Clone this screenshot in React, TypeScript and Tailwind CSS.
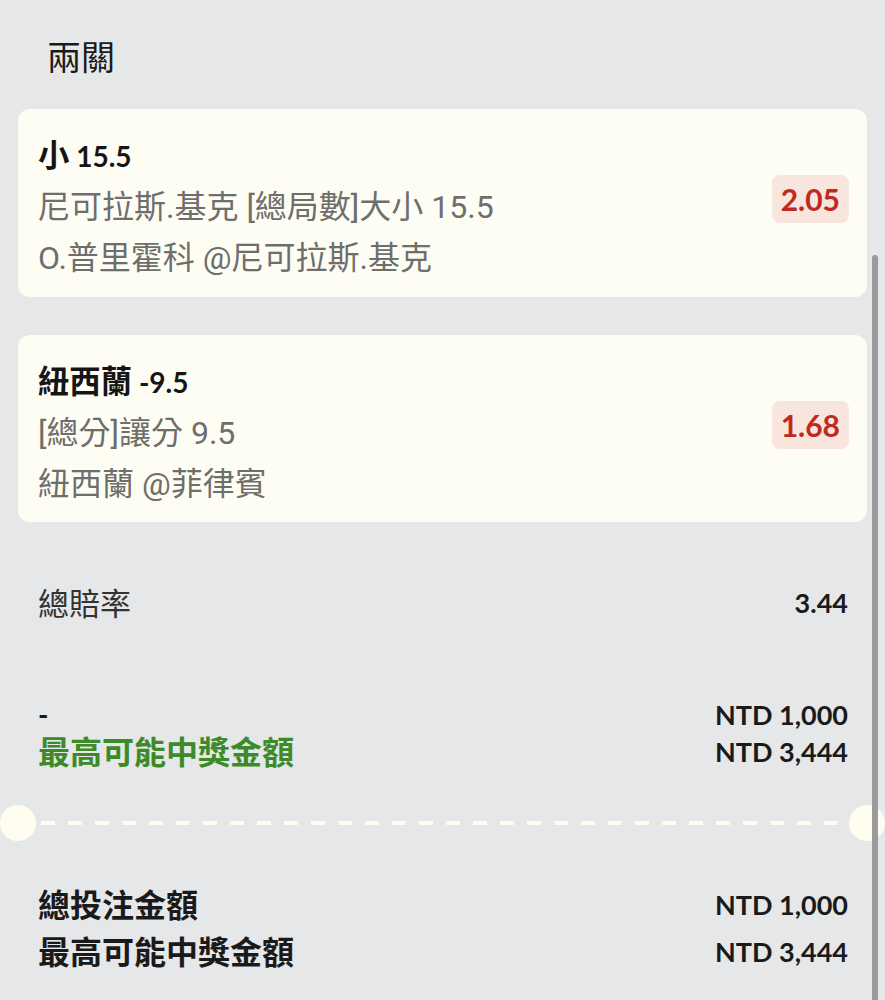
import React from 'react';

const CJK_RUN = /([\u2E80-\u9FFF\uF900-\uFAFF\uFF00-\uFFEF]+)/;

// CJK glyphs in the bold lines sit a bit larger than the Latin ones
const Mixed: React.FC<{ text: string }> = ({ text }) => (
  <>
    {text.split(CJK_RUN).map((part, i) =>
      CJK_RUN.test(part) ? (
        <span key={i} className="text-[1.12em]">
          {part}
        </span>
      ) : (
        <React.Fragment key={i}>{part}</React.Fragment>
      )
    )}
  </>
);

const SUB_FONT = { fontFamily: 'Roboto, "Noto Sans CJK TC", sans-serif' };

type Leg = {
  pick: string;
  market: string;
  match: string;
  odds: string;
  h: string;
};

const legs: Leg[] = [
  {
    pick: '小 15.5',
    market: '尼可拉斯.基克 [總局數]大小 15.5',
    match: 'O.普里霍科 @尼可拉斯.基克',
    odds: '2.05',
    h: 'h-[188px]',
  },
  {
    pick: '紐西蘭 -9.5',
    market: '[總分]讓分 9.5',
    match: '紐西蘭 @菲律賓',
    odds: '1.68',
    h: 'h-[187px]',
  },
];

const LegCard: React.FC<{ leg: Leg }> = ({ leg }) => (
  <div className={`${leg.h} bg-[#fefdf4] rounded-[12px] pl-[20px] pr-[18px] flex justify-between`}>
    <div className="pt-[21px]">
      <div className="text-[28px] leading-[51px] font-bold text-[#151515]">
        <Mixed text={leg.pick} />
      </div>
      <div className="text-[32px] leading-[51px] text-[#6e6e6c]" style={SUB_FONT}>
        {leg.market}
      </div>
      <div className="text-[32px] leading-[51px] text-[#6e6e6c]" style={SUB_FONT}>
        {leg.match}
      </div>
    </div>
    <div className="self-center -mt-[8px] h-[48px] px-[9px] rounded-[8px] bg-[#f8e5dd] text-[#bf2a20] text-[30px] leading-[48px] font-bold">
      {leg.odds}
    </div>
  </div>
);

const App: React.FC = () => {
  return (
    <div
      className="relative min-h-[1000px] w-full bg-[#e6e7e9] overflow-hidden"
      style={{ fontFamily: 'Lato, "Noto Sans CJK TC", sans-serif' }}
    >
      <div className="h-[109px] pl-[47px] pt-[36px] text-[34px] leading-[42px] text-[#1a1a1a]">
        兩關
      </div>

      <div className="px-[18px] flex flex-col gap-[38px]">
        {legs.map((leg) => (
          <LegCard key={leg.odds} leg={leg} />
        ))}
      </div>

      <div className="mt-[61px] pl-[38px] pr-[37px] flex justify-between items-center leading-[40px]">
        <span className="text-[31px] text-[#333333]">總賠率</span>
        <span className="text-[27px] font-bold text-[#1a1a1a]">3.44</span>
      </div>

      <div className="mt-[73px] pl-[38px] pr-[37px] leading-[37px] font-bold">
        <div className="flex justify-between items-center">
          <span className="text-[28px] text-[#1a1a1a]">-</span>
          <span className="text-[27px] text-[#1a1a1a]">NTD 1,000</span>
        </div>
        <div className="flex justify-between items-center">
          <span className="text-[32px] text-[#3c8a28]">最高可能中獎金額</span>
          <span className="text-[27px] text-[#1a1a1a]">NTD 3,444</span>
        </div>
      </div>

      <div className="mt-[35px] h-[36px] flex items-center">
        <div className="w-[36px] h-[36px] rounded-full bg-[#fefdf0] shrink-0" />
        <div className="flex-1 mx-[5px] h-[4px] bg-[repeating-linear-gradient(90deg,#fefdf0_0_14px,transparent_14px_27px)]" />
        <div className="w-[36px] h-[36px] rounded-full bg-[#fefdf0] shrink-0" />
      </div>

      <div className="mt-[40px] pl-[38px] pr-[37px] leading-[47px] font-bold text-[#1a1a1a]">
        <div className="flex justify-between items-center">
          <span className="text-[32px]">總投注金額</span>
          <span className="text-[27px]">NTD 1,000</span>
        </div>
        <div className="flex justify-between items-center">
          <span className="text-[32px]">最高可能中獎金額</span>
          <span className="text-[27px]">NTD 3,444</span>
        </div>
      </div>

      {/* overlay scrollbar thumb */}
      <div className="absolute right-[7px] top-[255px] bottom-0 w-[6px] rounded-t-full bg-[#9b9b9d]" />
    </div>
  );
};

export default App;
